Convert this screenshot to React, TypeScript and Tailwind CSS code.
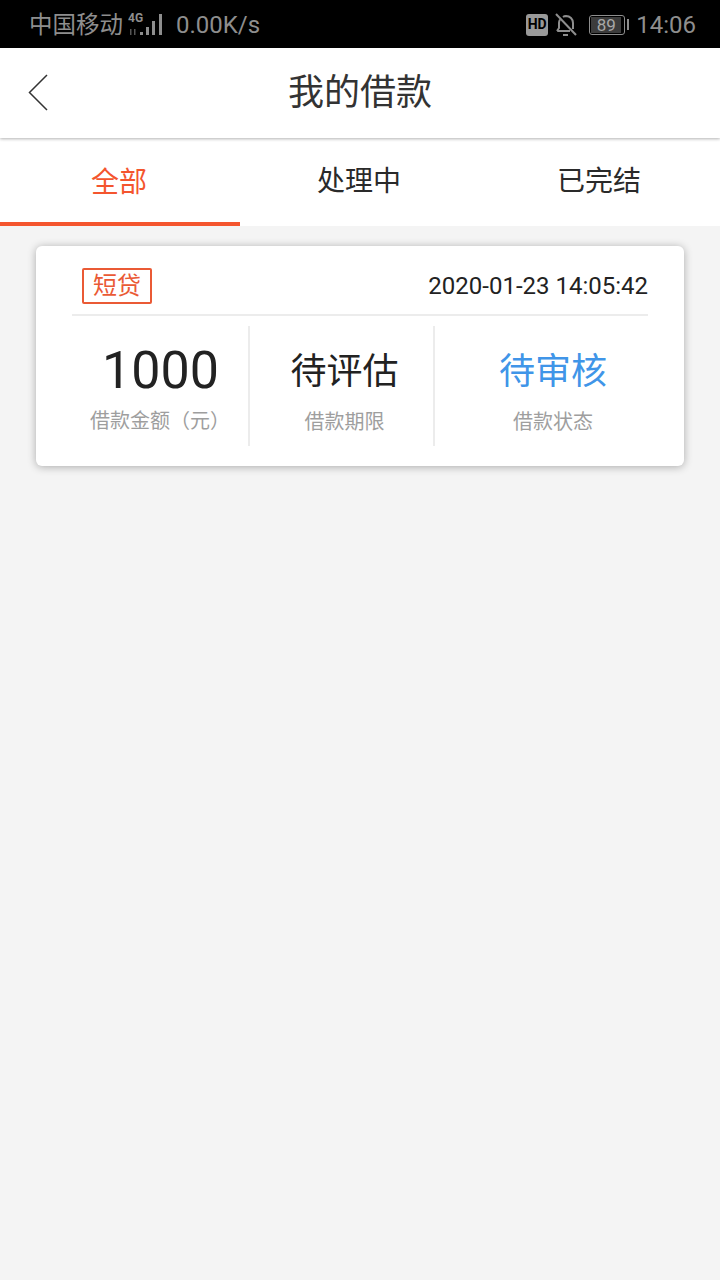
export default function App() {
  const font = { fontFamily: '"Roboto","Noto Sans CJK SC",sans-serif' };
  return (
    <div className="w-[720px] h-[1280px] bg-[#f4f4f4] flex flex-col overflow-hidden" style={font}>
      <div className="h-12 bg-black text-[#8e8e8e] flex items-center justify-between pl-[29px] pr-6 shrink-0">
        <div className="flex items-center">
          <span className="text-[23.500px] leading-none pt-[3px]">中国移动</span>
          <svg width="38" height="26" viewBox="0 0 38 26" className="ml-[5px] mt-[1px]" fill="#8e8e8e">
            <text x="0" y="10" fontSize="12" fontWeight="700" fontFamily="Roboto">4G</text>
            <rect x="2" y="17" width="1.500" height="6" opacity=".6" />
            <rect x="6" y="17" width="1.500" height="6" opacity=".6" />
            <rect x="12" y="20" width="3" height="3" />
            <rect x="18" y="15" width="3" height="8" />
            <rect x="24" y="9" width="3" height="14" />
            <rect x="31" y="2" width="3" height="21" />
          </svg>
          <span className="text-[24px] leading-none ml-[10px] pt-[2px]">0.00K/s</span>
        </div>
        <div className="flex items-center pt-[1px]">
          <div className="w-[22px] h-[22px] rounded-[3px] bg-[#999] text-black text-[14px] font-bold flex items-center justify-center">HD</div>
          <svg width="22" height="24" viewBox="0 0 22 24" className="ml-[7px]" fill="none" stroke="#8e8e8e" strokeWidth="2">
            <path d="M2 18h13M2 18l2-3V10c0-1.500.4-2.600 1-3.500M8 4c.8-.6 1.500-.9 3-1 4 0 7 3 7 7v6" />
            <path d="M8 22h5" />
            <path d="M1 1l20 21" />
          </svg>
          <div className="ml-[12px] w-[36px] h-[20px] rounded-[3px] border border-[#8e8e8e] p-[1px]">
            <div className="w-[30px] h-full bg-[#3c3c3c] text-[#a8a8a8] text-[17px] leading-[16px] text-center">89</div>
          </div>
          <div className="w-[2px] h-[11px] bg-[#8e8e8e] ml-[2px]" />
          <span className="text-[24px] leading-none ml-[7px]">14:06</span>
        </div>
      </div>
      <div className="h-[90px] bg-white shadow-[0_1px_3px_rgba(0,0,0,0.3)] relative z-10 flex items-center justify-center shrink-0">
        <svg width="22" height="38" viewBox="0 0 22 38" className="absolute left-[28px] top-[26px]" fill="none" stroke="#333" strokeWidth="1.500">
          <path d="M19 1L1.500 18.500 19 36" />
        </svg>
        <span className="text-[36px] text-[#333] leading-none">我的借款</span>
      </div>
      <div className="h-[88px] bg-white flex shrink-0">
        <div className="w-[240px] flex items-center justify-center text-[28px] text-[#f4552e] border-b-4 border-[#f4552e] pt-[5px] pr-[2px]">全部</div>
        <div className="w-[240px] flex items-center justify-center text-[28px] text-[#2a2a2a] pr-[2px]">处理中</div>
        <div className="w-[240px] flex items-center justify-center text-[28px] text-[#2a2a2a] pr-[2px]">已完结</div>
      </div>
      <div className="mx-9 mt-5 h-[220px] bg-white rounded-md shadow-[0_1px_8px_rgba(0,0,0,0.3)] px-9 flex flex-col">
        <div className="h-[70px] border-b-2 border-[#ececec] flex items-center justify-between pt-[11px]">
          <div className="ml-[10px] w-[70px] h-[36px] border-2 border-[#ea5a35] rounded-[2px] text-[#ea5a35] text-[24px] flex items-center justify-center leading-none">短贷</div>
          <span className="text-[24px] text-[#222] leading-none">2020-01-23 14:05:42</span>
        </div>
        <div className="flex mt-[10px] h-[120px]">
          <div className="w-[178px] border-r-2 border-[#ececec] flex flex-col items-center">
            <span className="text-[52px] text-[#222] leading-none mt-[19px] w-full text-right pr-[29px]">1000</span>
            <span className="text-[20px] text-[#9e9e9e] leading-none mt-[14px]">借款金额（元）</span>
          </div>
          <div className="w-[185px] border-r-2 border-[#ececec] flex flex-col items-center pl-[6px]">
            <span className="text-[36px] text-[#222] leading-none mt-[28px]">待评估</span>
            <span className="text-[20px] text-[#9e9e9e] leading-none mt-[22px]">借款期限</span>
          </div>
          <div className="flex-1 flex flex-col items-center pl-[23px]">
            <span className="text-[36px] text-[#4095e8] leading-none mt-[28px]">待审核</span>
            <span className="text-[20px] text-[#9e9e9e] leading-none mt-[22px]">借款状态</span>
          </div>
        </div>
      </div>
    </div>
  );
}
